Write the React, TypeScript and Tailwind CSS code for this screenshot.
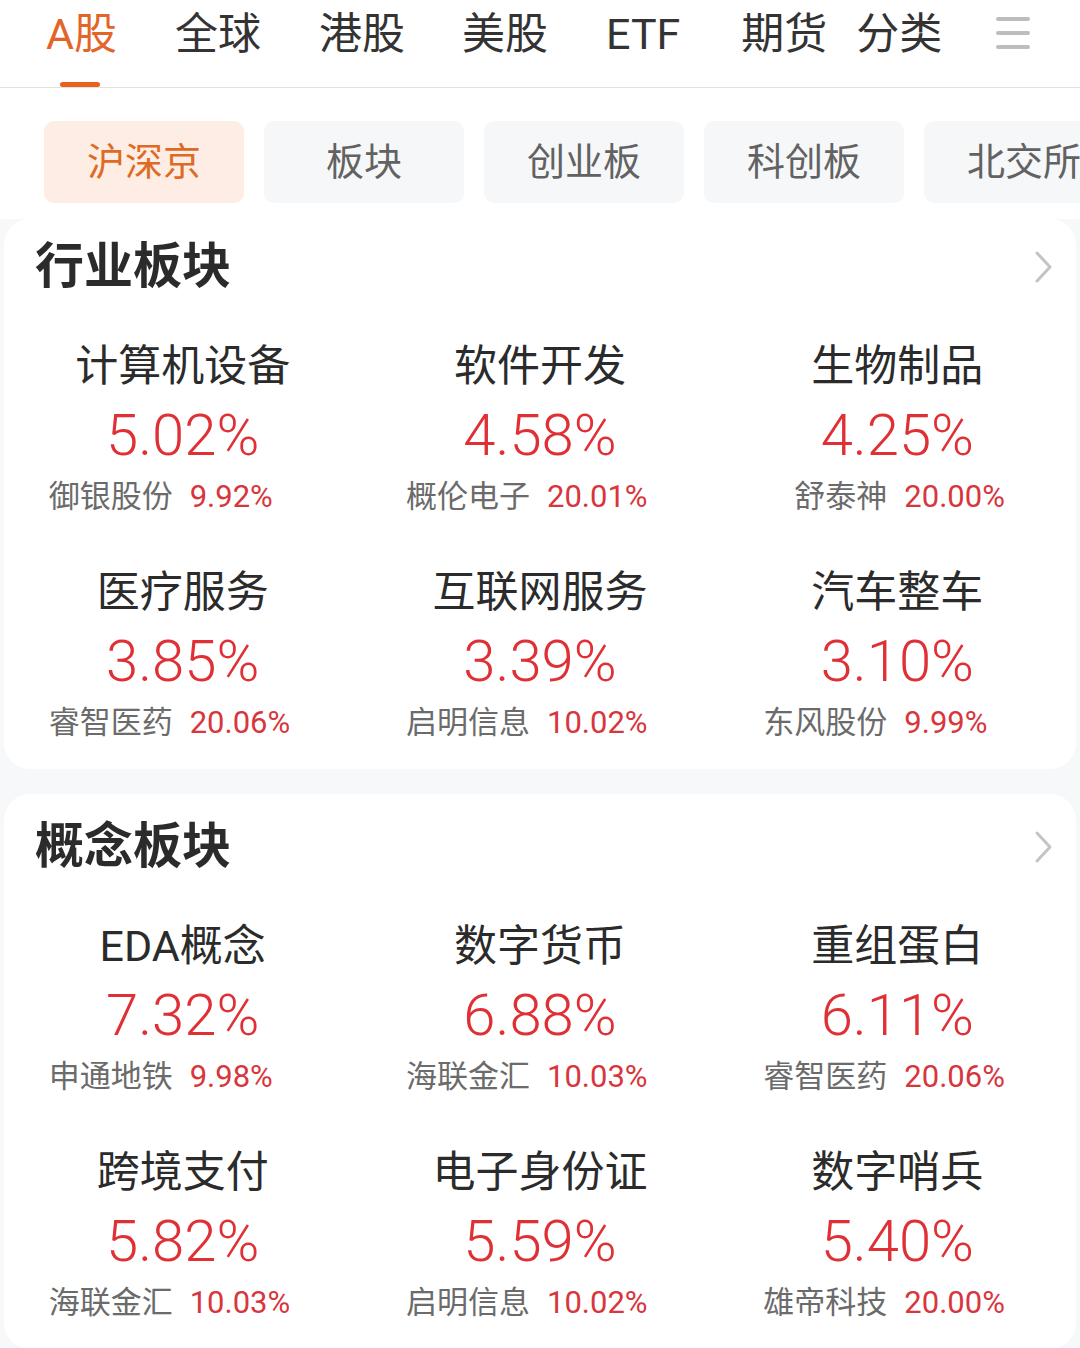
import React from "react";

type Item = { name: string; pct: string; stock: string; spct: string };

const industry: Item[] = [
  { name: "计算机设备", pct: "5.02%", stock: "御银股份", spct: "9.92%" },
  { name: "软件开发", pct: "4.58%", stock: "概伦电子", spct: "20.01%" },
  { name: "生物制品", pct: "4.25%", stock: "舒泰神", spct: "20.00%" },
  { name: "医疗服务", pct: "3.85%", stock: "睿智医药", spct: "20.06%" },
  { name: "互联网服务", pct: "3.39%", stock: "启明信息", spct: "10.02%" },
  { name: "汽车整车", pct: "3.10%", stock: "东风股份", spct: "9.99%" },
];

const concept: Item[] = [
  { name: "EDA概念", pct: "7.32%", stock: "申通地铁", spct: "9.98%" },
  { name: "数字货币", pct: "6.88%", stock: "海联金汇", spct: "10.03%" },
  { name: "重组蛋白", pct: "6.11%", stock: "睿智医药", spct: "20.06%" },
  { name: "跨境支付", pct: "5.82%", stock: "海联金汇", spct: "10.03%" },
  { name: "电子身份证", pct: "5.59%", stock: "启明信息", spct: "10.02%" },
  { name: "数字哨兵", pct: "5.40%", stock: "雄帝科技", spct: "20.00%" },
];

const font = { fontFamily: 'Roboto, "Noto Sans CJK SC", sans-serif' };

function Chevron() {
  return (
    <svg width="22" height="34" viewBox="0 0 22 34" fill="none">
      <path d="M5 3 L18 17 L5 31" stroke="#c4c4c4" strokeWidth="3" strokeLinecap="round" strokeLinejoin="round" />
    </svg>
  );
}

function Card({ title, items, extraTop }: { title: string; items: Item[]; extraTop?: boolean }) {
  return (
    <div className={`mx-[4px] rounded-[26px] bg-white ${extraTop ? "pt-[27px]" : "pt-[22px]"} pb-[26px]`}>
      <div className="flex h-[52px] items-center justify-between pl-[31px] pr-[22px]">
        <div className="text-[49px] font-bold leading-[52px] text-[#2b2b2b]">{title}</div>
        <Chevron />
      </div>
      <div className="mt-[48px] grid grid-cols-3 gap-y-[50px]">
        {items.map((it, i) => (
          <div key={i} className="flex flex-col items-center">
            <div className="text-[43px] leading-[50px] text-[#2b2b2b]">{it.name}</div>
            <div className="mt-[12px] text-[58px] font-light leading-[64px] text-[#df3035]">{it.pct}</div>
            <div className="mt-[10px] grid w-full grid-cols-2 text-[31px] leading-[40px]">
              <div className="pr-[10px] text-right text-[#6b6b6b]">{it.stock}</div>
              <div className="pl-[7px] text-left text-[#d8363d]">{it.spct}</div>
            </div>
          </div>
        ))}
      </div>
    </div>
  );
}

export default function App() {
  const tabs = [
    { t: "A股", ml: 46, active: true },
    { t: "全球", ml: 58 },
    { t: "港股", ml: 58 },
    { t: "美股", ml: 57 },
    { t: "ETF", ml: 58 },
    { t: "期货", ml: 61 },
    { t: "分类", ml: 29 },
  ];
  const subs = ["沪深京", "板块", "创业板", "科创板", "北交所"];
  return (
    <div className="h-[1348px] w-[1080px] overflow-hidden bg-white" style={font}>
      {/* top tabs */}
      <div className="relative flex h-[88px] items-start border-b border-[#e2e2e2] pt-[9px]">
        {tabs.map((tb, i) => (
          <div key={i} className="relative" style={{ marginLeft: tb.ml }}>
            <div className={`text-[43px] leading-[50px] ${tb.active ? "text-[#e2652a]" : "text-[#333333]"}`}>{tb.t}</div>
            {tb.active && <div className="absolute left-[14px] top-[73px] h-[5px] w-[40px] rounded-full bg-[#e8601c]" />}
          </div>
        ))}
        <div className="ml-[54px] mt-[8px] flex w-[34px] flex-col gap-[10px]">
          <div className="h-[4px] rounded-full bg-[#bdbdbd]" />
          <div className="h-[4px] rounded-full bg-[#bdbdbd]" />
          <div className="h-[4px] rounded-full bg-[#bdbdbd]" />
        </div>
      </div>
      {/* sub tabs */}
      <div className="flex gap-[20px] overflow-hidden pl-[44px] pt-[33px] pb-[16px]">
        {subs.map((s, i) => (
          <div
            key={i}
            className={`flex h-[82px] w-[200px] shrink-0 items-center justify-center rounded-[10px] text-[38px] ${
              i === 0 ? "bg-[#fdede4] text-[#dd6a25]" : "bg-[#f6f7f9] text-[#626262]"
            }`}
          >
            {s}
          </div>
        ))}
      </div>
      {/* cards */}
      <div className="bg-[#f7f8fa]">
        <Card title="行业板块" items={industry} />
        <div className="h-[25px]" />
        <Card title="概念板块" items={concept} extraTop />
      </div>
    </div>
  );
}
